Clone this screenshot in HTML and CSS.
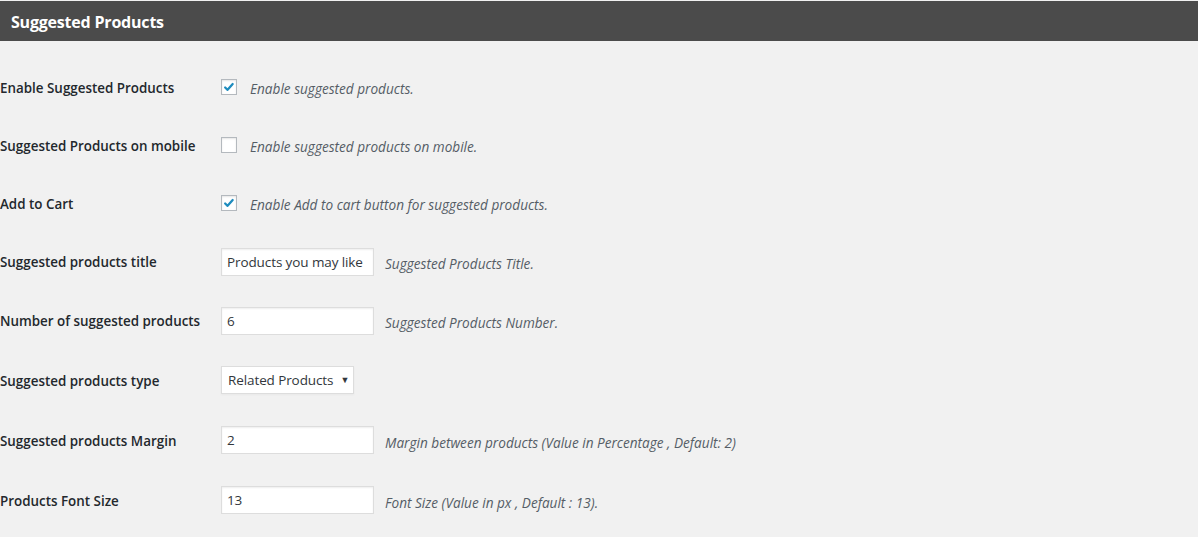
FILE: index.html
```html
<!DOCTYPE html>
<html>
<head>
<meta charset="utf-8">
<link rel="stylesheet" href="styles.css">
</head>
<body>
<div class="page">
  <h2 class="panel-title">Suggested Products</h2>
  <div class="form">
    <div class="row h58">
      <div class="label">Enable Suggested Products</div>
      <div class="field">
        <span class="check checked"><svg viewBox="0 0 16 16" width="16" height="16"><path d="M3.6 8.6 L6.4 11.2 L12.2 4.6" fill="none" stroke="#1e8cbe" stroke-width="2.6" stroke-linecap="round" stroke-linejoin="round"/></svg></span>
        <span class="desc cdesc">Enable suggested products.</span>
      </div>
    </div>
    <div class="row h58">
      <div class="label">Suggested Products on mobile</div>
      <div class="field">
        <span class="check"></span>
        <span class="desc cdesc">Enable suggested products on mobile.</span>
      </div>
    </div>
    <div class="row h58">
      <div class="label">Add to Cart</div>
      <div class="field">
        <span class="check checked"><svg viewBox="0 0 16 16" width="16" height="16"><path d="M3.6 8.6 L6.4 11.2 L12.2 4.6" fill="none" stroke="#1e8cbe" stroke-width="2.6" stroke-linecap="round" stroke-linejoin="round"/></svg></span>
        <span class="desc cdesc">Enable Add to cart button for suggested products.</span>
      </div>
    </div>
    <div class="row h59">
      <div class="label">Suggested products title</div>
      <div class="field">
        <span class="input">Products you may like</span>
        <span class="desc">Suggested Products Title.</span>
      </div>
    </div>
    <div class="row h59">
      <div class="label">Number of suggested products</div>
      <div class="field">
        <span class="input">6</span>
        <span class="desc">Suggested Products Number.</span>
      </div>
    </div>
    <div class="row h60">
      <div class="label">Suggested products type</div>
      <div class="field">
        <span class="select">Related Products<span class="arrow">▼</span></span>
      </div>
    </div>
    <div class="row h60">
      <div class="label">Suggested products Margin</div>
      <div class="field">
        <span class="input">2</span>
        <span class="desc">Margin between products (Value in Percentage , Default: 2)</span>
      </div>
    </div>
    <div class="row h60">
      <div class="label">Products Font Size</div>
      <div class="field">
        <span class="input">13</span>
        <span class="desc">Font Size (Value in px , Default : 13).</span>
      </div>
    </div>
  </div>
</div>
</body>
</html>
```
FILE: styles.css
```css
html, body {
  margin: 0;
  padding: 0;
  background: #f1f1f1;
}
body {
  font-family: "Open Sans", "Noto Sans", sans-serif;
  color: #23282d;
  width: 1198px;
  height: 537px;
  overflow: hidden;
}
.page {
  padding-top: 1px;
}
.panel-title {
  margin: 0;
  height: 40px;
  background: #4b4b4b;
  color: #fff;
  font-size: 16px;
  font-weight: 700;
  line-height: 42px;
  padding-left: 11px;
  letter-spacing: -0.2px;
}
.form {
  padding-top: 17px;
}
.row {
  display: flex;
  align-items: center;
}
.h58 { height: 58px; }
.h59 { height: 59px; }
.h60 { height: 60px; }
.label {
  width: 221px;
  flex: none;
  font-size: 13.4px;
  font-weight: 600;
  line-height: 18px;
  padding-top: 1px;
}
.field {
  display: flex;
  align-items: center;
}
.check {
  width: 14px;
  height: 14px;
  border: 1px solid #b4b9be;
  background: #fff;
  box-shadow: inset 0 1px 2px rgba(0,0,0,.1);
  display: flex;
  align-items: center;
  justify-content: center;
  margin-right: 13px;
}
.check svg {
  display: block;
}
.desc {
  font-size: 13.6px;
  font-style: italic;
  color: #555d66;
  margin-left: 11px;
  padding-top: 4px;
}
.cdesc {
  margin-left: 0;
  padding-top: 2px;
}
.input {
  box-sizing: border-box;
  width: 153px;
  height: 28px;
  border: 1px solid #ddd;
  background: #fff;
  box-shadow: inset 0 1px 2px rgba(0,0,0,.07);
  font-size: 13.5px;
  line-height: 26px;
  padding-left: 5px;
  color: #32373c;
  white-space: nowrap;
  overflow: hidden;
  letter-spacing: -0.1px;
}
.select {
  box-sizing: border-box;
  height: 28px;
  width: 133px;
  border: 1px solid #ddd;
  background: #fff;
  box-shadow: 0 1px 2px rgba(0,0,0,.04);
  font-size: 13.5px;
  line-height: 26px;
  padding-left: 6px;
  color: #32373c;
  display: flex;
  align-items: center;
  letter-spacing: -0.1px;
}
.arrow {
  font-size: 9px;
  margin-left: 7px;
  color: #32373c;
}
```
